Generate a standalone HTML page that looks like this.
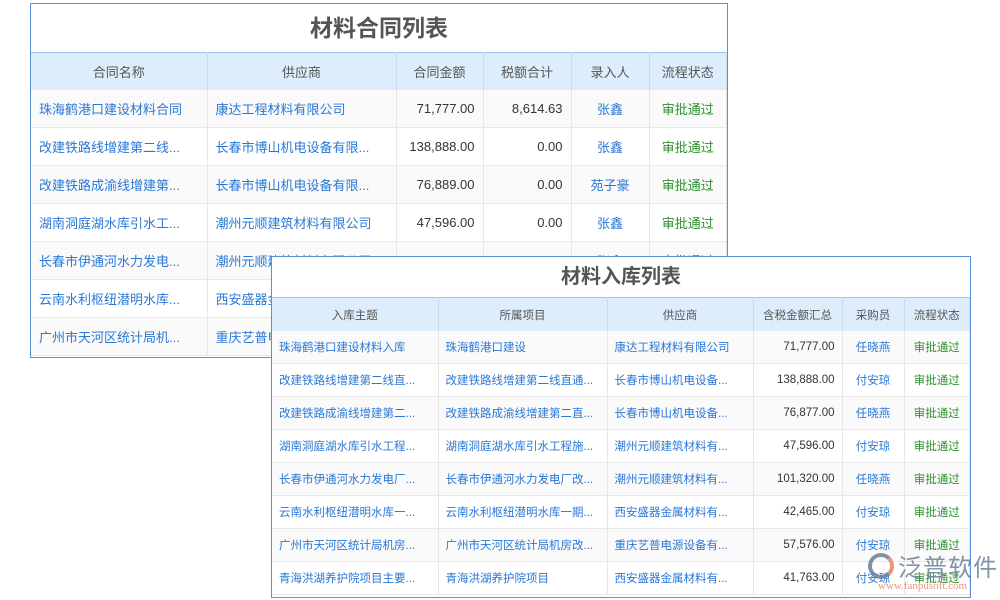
<!DOCTYPE html>
<html><head><meta charset="utf-8"><style>
body{margin:0;width:1000px;height:600px;background:#fff;position:relative;overflow:hidden;font-family:"Liberation Sans","Noto Sans CJK SC",sans-serif;}
.box{position:absolute;background:#fff;border:1px solid #5b8fd9;box-sizing:border-box;overflow:hidden}
.title{text-align:center;font-weight:bold;color:#555;background:#fff}
table{border-collapse:collapse;table-layout:fixed;width:100%}
th{background:#deedfb;color:#555;font-weight:normal;border-right:1px solid #c9dcef;border-top:1px solid #9ec3ec;padding:0}
td{border-right:1px solid #e6e6e6;border-bottom:1px solid #e8e8e8;white-space:nowrap;overflow:hidden;color:#2a78d6}
tr:nth-child(even) td{background:#fafafa}
td.n{color:#333;text-align:right}
td.c{text-align:center}
td.g{color:#2e8f2e;text-align:center}
#t1{left:30px;top:3px;width:698px;height:355px}
#t1 .title{height:48px;line-height:48px;font-size:23px}
#t1 th{height:37px;font-size:13px}
#t1 td{height:37px;font-size:13px;padding:0 8px}
#t2{left:271px;top:256px;width:700px;height:342px}
#t2 .title{height:40px;line-height:40px;font-size:20px}
#t2 th{height:33px;font-size:11.5px}
#t2 td{height:32px;font-size:11.5px;padding:0 7px}
</style></head><body>
<div class="box" id="t1"><div class="title">材料合同列表</div>
<table><colgroup><col style="width:176px"><col style="width:189px"><col style="width:87px"><col style="width:88px"><col style="width:78px"><col></colgroup>
<tr><th>合同名称</th><th>供应商</th><th>合同金额</th><th>税额合计</th><th>录入人</th><th>流程状态</th></tr>
<tr><td>珠海鹤港口建设材料合同</td><td>康达工程材料有限公司</td><td class="n">71,777.00</td><td class="n">8,614.63</td><td class="c">张鑫</td><td class="g">审批通过</td></tr>
<tr><td>改建铁路线增建第二线...</td><td>长春市博山机电设备有限...</td><td class="n">138,888.00</td><td class="n">0.00</td><td class="c">张鑫</td><td class="g">审批通过</td></tr>
<tr><td>改建铁路成渝线增建第...</td><td>长春市博山机电设备有限...</td><td class="n">76,889.00</td><td class="n">0.00</td><td class="c">苑子豪</td><td class="g">审批通过</td></tr>
<tr><td>湖南洞庭湖水库引水工...</td><td>潮州元顺建筑材料有限公司</td><td class="n">47,596.00</td><td class="n">0.00</td><td class="c">张鑫</td><td class="g">审批通过</td></tr>
<tr><td>长春市伊通河水力发电...</td><td>潮州元顺建筑材料有限公司</td><td class="n">0.00</td><td class="n">0.00</td><td class="c">张鑫</td><td class="g">审批通过</td></tr>
<tr><td>云南水利枢纽潜明水库...</td><td>西安盛器金属材料有限公司</td><td class="n">0.00</td><td class="n">0.00</td><td class="c">张鑫</td><td class="g">审批通过</td></tr>
<tr><td>广州市天河区统计局机...</td><td>重庆艺普电源设备有限公司</td><td class="n">0.00</td><td class="n">0.00</td><td class="c">张鑫</td><td class="g">审批通过</td></tr>
</table></div>
<div class="box" id="t2"><div class="title">材料入库列表</div>
<table><colgroup><col style="width:166px"><col style="width:169px"><col style="width:146px"><col style="width:89px"><col style="width:62px"><col></colgroup>
<tr><th>入库主题</th><th>所属项目</th><th>供应商</th><th>含税金额汇总</th><th>采购员</th><th>流程状态</th></tr>
<tr><td>珠海鹤港口建设材料入库</td><td>珠海鹤港口建设</td><td>康达工程材料有限公司</td><td class="n">71,777.00</td><td class="c">任晓燕</td><td class="g">审批通过</td></tr>
<tr><td>改建铁路线增建第二线直...</td><td>改建铁路线增建第二线直通...</td><td>长春市博山机电设备...</td><td class="n">138,888.00</td><td class="c">付安琼</td><td class="g">审批通过</td></tr>
<tr><td>改建铁路成渝线增建第二...</td><td>改建铁路成渝线增建第二直...</td><td>长春市博山机电设备...</td><td class="n">76,877.00</td><td class="c">任晓燕</td><td class="g">审批通过</td></tr>
<tr><td>湖南洞庭湖水库引水工程...</td><td>湖南洞庭湖水库引水工程施...</td><td>潮州元顺建筑材料有...</td><td class="n">47,596.00</td><td class="c">付安琼</td><td class="g">审批通过</td></tr>
<tr><td>长春市伊通河水力发电厂...</td><td>长春市伊通河水力发电厂改...</td><td>潮州元顺建筑材料有...</td><td class="n">101,320.00</td><td class="c">任晓燕</td><td class="g">审批通过</td></tr>
<tr><td>云南水利枢纽潜明水库一...</td><td>云南水利枢纽潜明水库一期...</td><td>西安盛器金属材料有...</td><td class="n">42,465.00</td><td class="c">付安琼</td><td class="g">审批通过</td></tr>
<tr><td>广州市天河区统计局机房...</td><td>广州市天河区统计局机房改...</td><td>重庆艺普电源设备有...</td><td class="n">57,576.00</td><td class="c">付安琼</td><td class="g">审批通过</td></tr>
<tr><td>青海洪湖养护院项目主要...</td><td>青海洪湖养护院项目</td><td>西安盛器金属材料有...</td><td class="n">41,763.00</td><td class="c">付安琼</td><td class="g">审批通过</td></tr>
</table></div>
<div style="position:absolute;left:868px;top:553px;width:26px;height:26px;border-radius:50%;border:4px solid #6d7f99;border-right-color:#e0876a;box-sizing:border-box;opacity:.85"></div>
<div style="position:absolute;left:898px;top:548px;font-size:24px;color:#6d7f99;opacity:.85;letter-spacing:1px">泛普软件</div>
<div style="position:absolute;left:878px;top:580px;font-size:11px;color:#e0876a;font-family:'Liberation Serif',serif;opacity:.85">www.fanpusoft.com</div>
</body></html>
